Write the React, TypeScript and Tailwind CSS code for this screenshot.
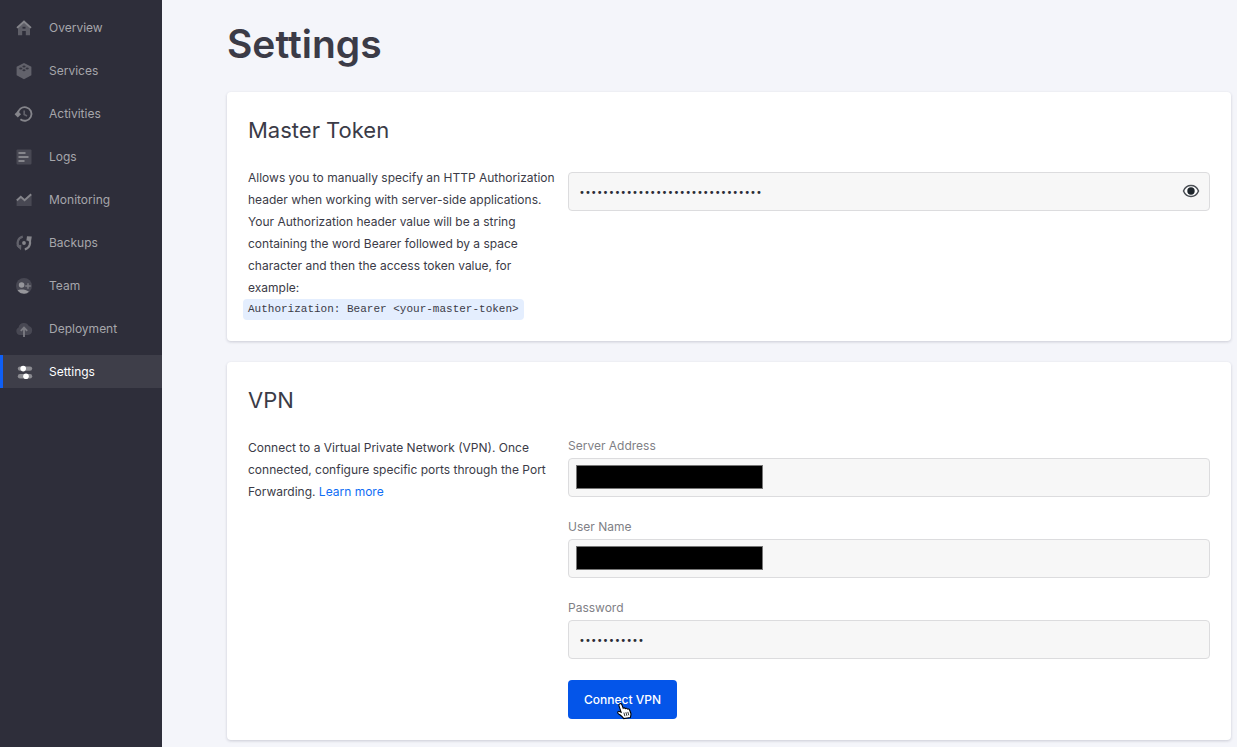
import type { ReactNode } from "react";

type NavItem = { label: string; icon: ReactNode; active?: boolean };

const navItems: NavItem[] = [
  {
    label: "Overview",
    icon: (
      <>
        <path d="M2 7.500 8 2.500l6 5V15.200h-4.200V11H6.200v4.200H2z" fill="#5e5e67" />
        <path d="M8 .2 15.600 7.200 14.400 8.600 8 3 1.600 8.600.4 7.200z" fill="#85858b" />
        <rect x="6.500" y="6.800" width="3" height="1.800" fill="#2e2e3a" />
      </>
    ),
  },
  {
    label: "Services",
    icon: (
      <>
        <path d="M8 0 15.400 3.800v8.400L8 16.200.6 12.200V3.800z" fill="#62626b" />
        <ellipse cx="8" cy="3.500" rx="1.600" ry="1" fill="#34343f" />
        <ellipse cx="4.800" cy="5.400" rx="1.600" ry="1" fill="#34343f" />
        <ellipse cx="11.200" cy="5.400" rx="1.600" ry="1" fill="#34343f" />
        <ellipse cx="8" cy="7.300" rx="1.600" ry="1" fill="#34343f" />
      </>
    ),
  },
  {
    label: "Activities",
    icon: (
      <>
        <path d="M1.900 8A6.800 6.800 0 1 1 4.400 13.200" fill="none" stroke="#85858b" strokeWidth="1.800" />
        <path d="M-1.400 8.200 1.800 5 5 8.200 1.800 11.400z" fill="#85858b" />
        <path d="M8.200 4.600v4l2.800 1.500" fill="none" stroke="#62626b" strokeWidth="1.700" />
      </>
    ),
  },
  {
    label: "Logs",
    icon: (
      <>
        <rect x=".5" y=".5" width="15" height="15" rx="1" fill="#484853" />
        <path d="M2.500 4h7M2.500 8h10M2.500 12h6" stroke="#85858b" strokeWidth="1.800" />
      </>
    ),
  },
  {
    label: "Monitoring",
    icon: (
      <>
        <path d="m.6 9 4-3.400 4 3.200 7-6V14H.6z" fill="#484853" />
        <path d="m.8 8.400 4-3.600 3.800 3.400 6.600-6" fill="none" stroke="#85858b" strokeWidth="2" />
      </>
    ),
  },
  {
    label: "Backups",
    icon: (
      <>
        <path d="M6.800 1.600A6.500 6.500 0 0 0 3.400 12.400" fill="none" stroke="#62626b" strokeWidth="2.200" />
        <path d="M.2 10.600 5.400 9.800 5 15.200z" fill="#62626b" />
        <path d="M8.800 14.300A6.500 6.500 0 0 0 12.400 3.600" fill="none" stroke="#85858b" strokeWidth="2.200" />
        <path d="M15.800 1.400 15 6.200 10.400 5.600 11 1.200z" fill="#85858b" />
        <circle cx="8" cy="8" r="1.900" fill="#85858b" />
      </>
    ),
  },
  {
    label: "Team",
    icon: (
      <>
        <circle cx="8" cy="8" r="8" fill="#484853" />
        <circle cx="5.600" cy="7" r="2.800" fill="#96969b" />
        <path d="M1.600 12.600C3.400 11.200 9 11 13 13.800a8 8 0 0 1-11.400-1.200z" fill="#96969b" />
        <path d="M12 5.200v5.600M9.200 8h5.600" stroke="#7c7c83" strokeWidth="1.500" />
      </>
    ),
  },
  {
    label: "Deployment",
    icon: (
      <>
        <path d="M3.800 14A3.900 3.900 0 0 1 2.600 6.600 5.400 5.400 0 0 1 12.800 5a4.600 4.600 0 0 1-.8 9z" fill="#484853" />
        <path d="M8 16V7M4.800 9.800 8 6.600l3.200 3.200" fill="none" stroke="#7c7c83" strokeWidth="1.800" />
      </>
    ),
  },
  {
    label: "Settings",
    active: true,
    icon: (
      <>
        <rect x="1.800" y="2.400" width="14.400" height="4.400" rx="2.200" fill="#8b8b91" />
        <rect x="1.800" y="10" width="14.400" height="4.400" rx="2.200" fill="#8b8b91" />
        <circle cx="7.200" cy="4.600" r="2.800" fill="#fff" />
        <circle cx="10" cy="12.200" r="2.800" fill="#fff" />
      </>
    ),
  },
];

const textInputClass =
  "h-[39px] w-full rounded border border-[#dcdcde] bg-[#f7f7f7] px-3 text-xs text-[#3b3b47] outline-none";
const passwordInputClass =
  "h-[39px] w-full rounded border border-[#dcdcde] bg-[#f7f7f7] px-[10px] pt-[2px] font-['DejaVu_Sans',sans-serif] text-[10px] text-[#2b2b37] outline-none";

function Sidebar() {
  return (
    <nav className="w-[162px] shrink-0 bg-[#2e2e3a] pt-[11px]">
      <ul className="flex flex-col gap-[10px]">
        {navItems.map((item) => (
          <li key={item.label}>
            <a
              href="#"
              aria-current={item.active ? "page" : undefined}
              className={
                item.active
                  ? "flex h-[33px] items-center gap-[17px] border-l-[3px] border-[#0f5ff5] bg-[#3e3e49] pl-[13px] text-xs text-white"
                  : "flex h-[33px] items-center gap-[17px] border-l-[3px] border-transparent pl-[13px] text-xs text-[#a6a6ab]"
              }
            >
              <svg viewBox="0 0 16 16" className="size-4 overflow-visible" aria-hidden="true">
                {item.icon}
              </svg>
              {item.label}
            </a>
          </li>
        ))}
      </ul>
    </nav>
  );
}

function Card({ title, description, children }: { title: string; description: ReactNode; children: ReactNode }) {
  return (
    <section className="rounded bg-white px-[21px] pt-[22px] pb-[21px] shadow-[0_1px_3px_rgba(40,40,70,0.2)]">
      <h2 className="text-[22px] leading-8 text-[#3b3b47]">{title}</h2>
      <div className="mt-[21px] flex gap-2">
        <div className="w-[312px] shrink-0 text-xs leading-[22px] text-[#3b3b47]">{description}</div>
        <div className="min-w-0 flex-1">{children}</div>
      </div>
    </section>
  );
}

function Field({ id, label, type, value, redacted }: { id: string; label: string; type: string; value?: string; redacted?: boolean }) {
  return (
    <div>
      <label htmlFor={id} className="block text-xs leading-[18px] text-[#7f7f86]">
        {label}
      </label>
      <div className="relative mt-[3px]">
        <input
          id={id}
          type={type}
          defaultValue={value}
          className={type === "password" ? passwordInputClass : textInputClass}
        />
        {redacted && <span className="absolute top-[7px] left-2 h-6 w-[187px] border border-[#777] bg-black" />}
      </div>
    </div>
  );
}

function PointerCursor() {
  return (
    <svg viewBox="0 0 14 16" className="pointer-events-none absolute top-[23px] left-[49px] h-4 w-[14px] overflow-visible" aria-hidden="true">
      <path
        d="M2.600.9c1-.6 2-.1 2.300.9l1.300 3.400c.7-.6 1.700-.4 2.100.4.7-.6 1.700-.3 2.100.5.9-.4 1.900 0 2.200.9l1.300 3.500c.3 1.400-.3 2.500-.5 4l-6.600 1.100C5.600 13.600 3.400 12.300 1 10.300c-.8-1.100.2-2.400 1.400-1.900l1.700.8L2 2.900C1.700 2.100 1.900 1.300 2.600.9z"
        fill="#fff"
        stroke="#000"
        strokeWidth="1.100"
      />
      <path d="m6.900 9.600 1 3.600M8.900 9.200l1 3.600M10.800 8.900l1 3.400" stroke="#000" strokeWidth=".8" />
    </svg>
  );
}

export default function App() {
  return (
    <div className="flex min-h-screen bg-[#f4f5fa] font-['Inter','Liberation_Sans',sans-serif]">
      <Sidebar />
      <main className="min-w-0 flex-1 pt-5 pr-[6px] pb-[6px] pl-[65px]">
        <h1 className="text-[39px] leading-[48px] font-semibold text-[#3b3b47]">Settings</h1>
        <div className="mt-6 flex flex-col gap-[21px]">
          <Card
            title="Master Token"
            description={
              <>
                <p>
                  Allows you to manually specify an HTTP Authorization header when working with server-side
                  applications. Your Authorization header value will be a string containing the word Bearer followed by
                  a space character and then the access token value, for example:
                </p>
                <code className="-ml-[5px] block w-fit rounded bg-[#e4eefe] px-[5px] font-['Liberation_Mono',monospace] text-[11px] leading-[21px] whitespace-nowrap">
                  Authorization: Bearer &lt;your-master-token&gt;
                </code>
              </>
            }
          >
            <div className="relative mt-[5px]">
              <input
                type="password"
                aria-label="Master Token"
                defaultValue="0123456789012345678901234567890"
                className={passwordInputClass}
              />
              <button type="button" aria-label="Show token" className="absolute top-[11px] right-[11px]">
                <svg viewBox="0 0 16 16" className="size-4 overflow-visible" aria-hidden="true">
                  <path
                    d="M.5 8C2 4.400 4.600 2.600 8 2.600S14 4.400 15.500 8C14 11.600 11.400 13.400 8 13.400S2 11.600.5 8z"
                    fill="#fff"
                    stroke="#4b4f55"
                    strokeWidth="1.500"
                  />
                  <circle cx="8" cy="8" r="3.700" fill="#1e252b" />
                </svg>
              </button>
            </div>
          </Card>
          <Card
            title="VPN"
            description={
              <p>
                Connect to a Virtual Private Network (VPN). Once connected, configure specific ports through the Port
                Forwarding.{" "}
                <a href="#" className="text-[#0f6ef5]">
                  Learn more
                </a>
              </p>
            }
          >
            <form className="flex flex-col gap-[21px]" onSubmit={(event) => event.preventDefault()}>
              <Field id="server" label="Server Address" type="text" redacted />
              <Field id="user" label="User Name" type="text" redacted />
              <Field id="password" label="Password" type="password" value="01234567890" />
              <div className="relative self-start">
                <button type="submit" className="h-[39px] rounded bg-[#0455e9] px-4 text-xs font-medium text-white">
                  Connect VPN
                </button>
                <PointerCursor />
              </div>
            </form>
          </Card>
        </div>
      </main>
    </div>
  );
}
